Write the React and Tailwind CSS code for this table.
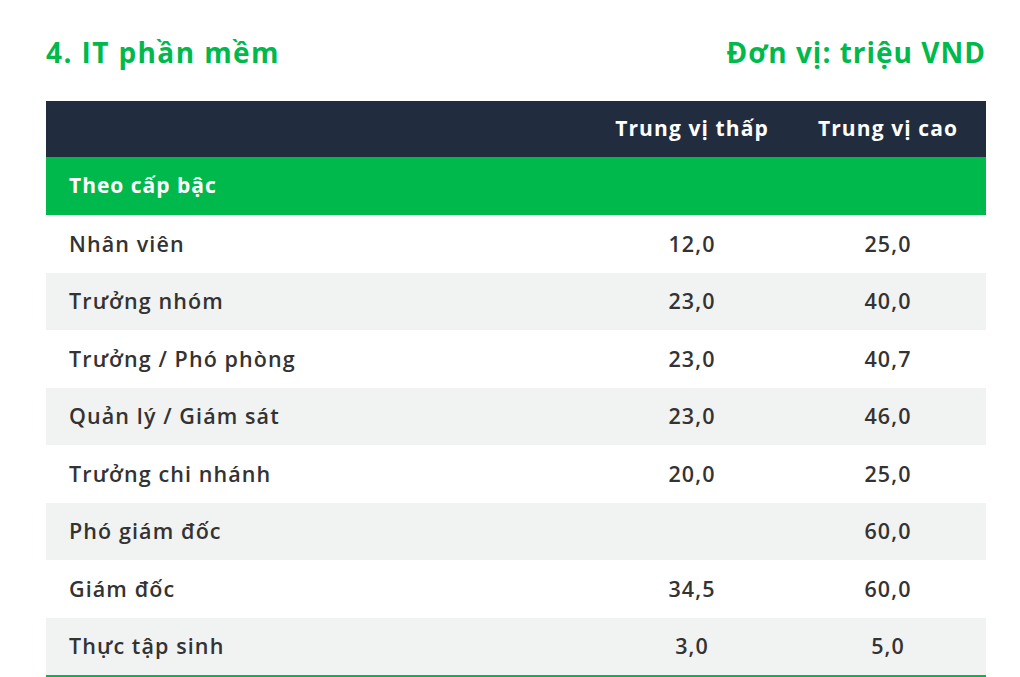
import React from "react";

const rows = [
  ["Nhân viên", "12,0", "25,0"],
  ["Trưởng nhóm", "23,0", "40,0"],
  ["Trưởng / Phó phòng", "23,0", "40,7"],
  ["Quản lý / Giám sát", "23,0", "46,0"],
  ["Trưởng chi nhánh", "20,0", "25,0"],
  ["Phó giám đốc", "", "60,0"],
  ["Giám đốc", "34,5", "60,0"],
  ["Thực tập sinh", "3,0", "5,0"],
];

export default function App() {
  return (
    <div
      className="w-[1020px] h-[677px] bg-white overflow-hidden pl-[46px] pr-[34px]"
      style={{ fontFamily: '"Open Sans", "Noto Sans", sans-serif' }}
    >
      <div className="flex items-center justify-between h-[101px] pt-[3px] text-[#00b94d] font-bold text-[28px] tracking-[1.4px]">
        <span>4. IT phần mềm</span>
        <span className="tracking-[1px]">Đơn vị: triệu VND</span>
      </div>
      <div className="w-[940px]">
        <div className="flex items-center h-[56px] bg-[#212d3f] text-white font-bold text-[21px] tracking-[1.1px]">
          <div className="flex-1" />
          <div className="w-[196px] text-center">Trung vị thấp</div>
          <div className="w-[196px] text-center">Trung vị cao</div>
        </div>
        <div className="flex items-center h-[58px] bg-[#00b94d] text-white font-bold text-[21px] tracking-[1px] pl-[23px]">
          Theo cấp bậc
        </div>
        {rows.map((r, i) => (
          <div
            key={i}
            className={`flex items-center h-[57.5px] text-[#333333] font-semibold text-[21.5px] tracking-[1.1px] ${
              i % 2 === 1 ? "bg-[#f1f2f2]" : "bg-white"
            }`}
          >
            <div className="flex-1 pl-[23px]">{r[0]}</div>
            <div className="w-[196px] text-center">{r[1]}</div>
            <div className="w-[196px] text-center">{r[2]}</div>
          </div>
        ))}
        <div className="h-[4px] bg-[#00b94d]" />
      </div>
    </div>
  );
}
